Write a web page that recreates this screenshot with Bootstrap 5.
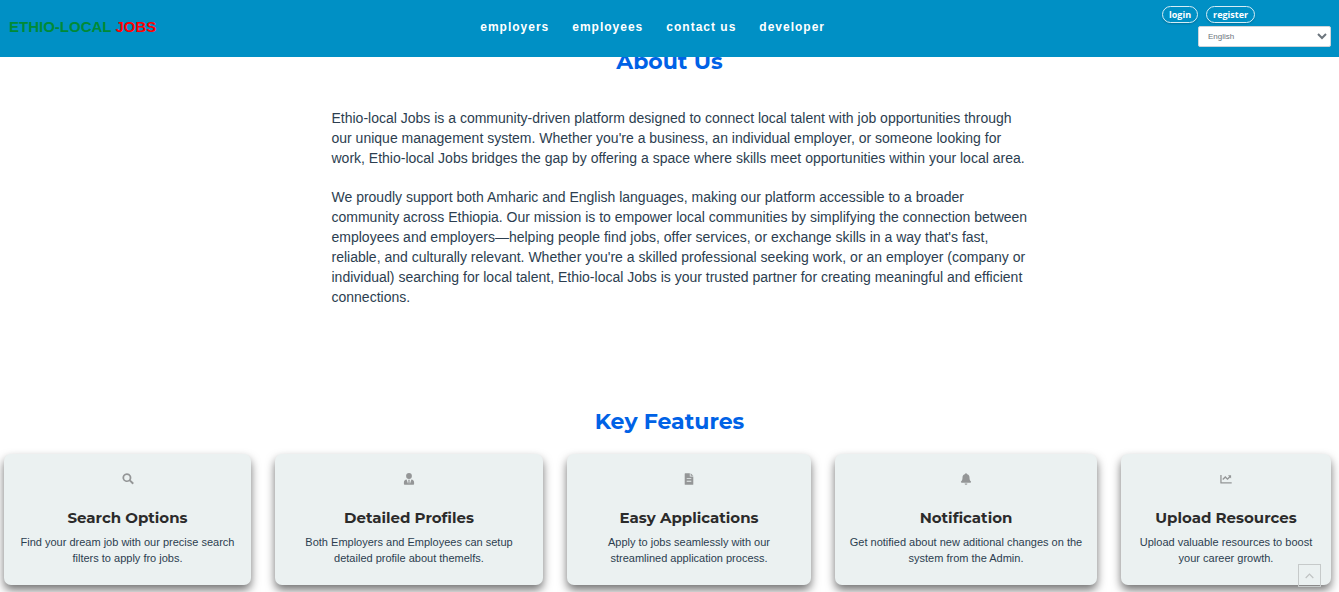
<!DOCTYPE html>
<html lang="en">
<head>
<meta charset="utf-8">
<meta name="viewport" content="width=device-width, initial-scale=1">
<title>Ethio-Local Jobs</title>
<link href="https://cdn.jsdelivr.net/npm/bootstrap@5.3.0/dist/css/bootstrap.min.css" rel="stylesheet">
<style>
  body { font-family: "Liberation Sans", Arial, sans-serif; color: #2c3e50; background: #fff; }
  .site-header { background: #0090c5; height: 57px; padding: 0 8px 0 9px; }
  .brand { font-size: 15px; line-height: 20px; font-weight: 700; color: #008a37; text-decoration: none; }
  .brand span { color: #f00; }
  .site-nav { gap: 23px; }
  .site-nav a { font-size: 12px; line-height: 20px; font-weight: 700; letter-spacing: 1px; color: #fff; text-decoration: none; }
  .account-area { width: 182px; gap: 3px; padding-top: 6px; }
  .auth-row { padding-left: 13px; }
  .pill-btn { font: 700 9px/13px "Open Sans", sans-serif; color: #fff; background: transparent; border: 1px solid #d5edf6; border-radius: 10px; padding: 1px 6px; height: 17px; box-shadow: 0 1px 2px rgba(0,0,0,.2); }
  .lang-select { width: 133px; height: 21px; font-size: 8px; color: #6c757d; background: #fff; border: 1px solid #ced4da; border-radius: 2px; padding: 0 5px; }
  .section-title { font-family: Montserrat, Inter, sans-serif; font-weight: 700; font-size: 22px; line-height: 28px; color: #0062e6; text-align: center; margin: 0; }
  .about { padding-top: 48px; }
  .about-text { max-width: 724px; margin: 32px auto 0; padding-left: 24px; font-size: 14px; line-height: 20px; }
  .about-text p { margin: 0 0 19px; }
  .features { padding-top: 82px; }
  .feature-grid { display: grid; grid-template-columns: 247fr 268fr 244fr 262fr 210fr; gap: 24px; padding: 18px 8px 7px 4px; }
  .feature { background: #ebf1f1; border-radius: 7px; padding: 17px 12px 19px; text-align: center; box-shadow: 0 5px 10px rgba(0,0,0,.55); }
  .feature svg { display: block; width: 12px; height: 16px; margin: 0 auto 22px; fill: #949697; }
  .feature h3 { font-family: Montserrat, Inter, sans-serif; font-weight: 700; font-size: 15px; line-height: 18px; color: #2b2b2b; margin: 0 0 7px; }
  .feature p { font-size: 11px; line-height: 16px; margin: 0; }
  .to-top { right: 18px; bottom: 5px; width: 23px; height: 23px; border: 1px solid #c6caca; background: transparent; padding: 0; }
</style>
</head>
<body>
<header class="site-header fixed-top d-flex justify-content-between">
  <div class="d-flex align-items-center pb-1"><a class="brand" href="#">ETHIO-LOCAL <span>JOBS</span></a></div>
  <nav class="site-nav d-flex align-items-center pb-1" aria-label="Main">
    <a href="#">employers</a><a href="#">employees</a><a href="#">contact us</a><a href="#">developer</a>
  </nav>
  <div class="account-area d-flex flex-column">
    <div class="auth-row d-flex gap-2"><button class="pill-btn" type="button">login</button><button class="pill-btn" type="button">register</button></div>
    <select class="lang-select align-self-end" aria-label="Language"><option>English</option><option>Amharic</option></select>
  </div>
</header>
<main>
  <section class="about">
    <h2 class="section-title">About Us</h2>
    <div class="about-text">
      <p>Ethio-local Jobs is a community-driven platform designed to connect local talent with job opportunities through our unique management system. Whether you're a business, an individual employer, or someone looking for work, Ethio-local Jobs bridges the gap by offering a space where skills meet opportunities within your local area.</p>
      <p>We proudly support both Amharic and English languages, making our platform accessible to a broader community across Ethiopia. Our mission is to empower local communities by simplifying the connection between employees and employers—helping people find jobs, offer services, or exchange skills in a way that's fast, reliable, and culturally relevant. Whether you're a skilled professional seeking work, or an employer (company or individual) searching for local talent, Ethio-local Jobs is your trusted partner for creating meaningful and efficient connections.</p>
    </div>
  </section>
  <section class="features">
    <h2 class="section-title">Key Features</h2>
    <div class="feature-grid">
      <article class="feature">
        <svg viewBox="0 0 12 16" aria-hidden="true"><path fill-rule="evenodd" d="M4.900 2.300a4.400 4.400 0 1 0 2.500 8l2.700 2.700q.5.4.9 0l.5-.5q.4-.5 0-.9L8.700 9a4.400 4.400 0 0 0-3.800-6.700zM4.900 4a2.700 2.700 0 1 1 0 5.400 2.700 2.700 0 0 1 0-5.400z"/></svg>
        <h3>Search Options</h3>
        <p>Find your dream job with our precise search filters to apply fro jobs.</p>
      </article>
      <article class="feature">
        <svg viewBox="0 0 12 16" aria-hidden="true"><circle cx="6" cy="5" r="2.900"/><path d="M3.600 8.600 5.100 13 5.500 10 5.100 8.700h1.800L6.500 10l.4 3 1.500-4.400c1.800.2 2.700 1.300 2.700 3v1.300q0 .8-.8.8H1.700q-.8 0-.8-.8v-1.300c0-1.700.9-2.800 2.700-3z"/></svg>
        <h3>Detailed Profiles</h3>
        <p>Both Employers and Employees can setup detailed profile about themelfs.</p>
      </article>
      <article class="feature">
        <svg viewBox="0 0 12 16" aria-hidden="true"><path fill-rule="evenodd" d="M2.300 2.200h4.500v3.300h3.500v7.700q0 .6-.6.6H2.300q-.6 0-.6-.6V2.800q0-.6.6-.6zM3.700 7.200v.9h4.600v-.9zm0 2.600v.9h4.600v-.9zM7.600 2.200l2.700 2.600H7.600z"/></svg>
        <h3>Easy Applications</h3>
        <p>Apply to jobs seamlessly with our streamlined application process.</p>
      </article>
      <article class="feature">
        <svg viewBox="0 0 12 16" aria-hidden="true"><path d="M6 2q.7 0 .7.9c1.900.4 2.800 1.700 2.800 3.600 0 2.100.5 3 1.300 3.800.6.700.2 1.500-.6 1.500H1.800c-.8 0-1.200-.8-.6-1.500.8-.8 1.300-1.700 1.300-3.800 0-1.900.9-3.200 2.800-3.600Q5.300 2 6 2zM4.600 12.400h2.800a1.400 1.400 0 0 1-2.800 0z"/></svg>
        <h3>Notification</h3>
        <p>Get notified about new aditional changes on the system from the Admin.</p>
      </article>
      <article class="feature">
        <svg viewBox="0 0 12 16" aria-hidden="true"><path d="M.3 4h1.300v7.200h10.100v1.300H.9q-.6 0-.6-.6zM8 4.300h3.100v3.100L10.100 6.500 7.500 9.100 5.300 6.900 3.200 9l-.9-.9 3-3 2.200 2.200 1.600-1.700z"/></svg>
        <h3>Upload Resources</h3>
        <p>Upload valuable resources to boost your career growth.</p>
      </article>
    </div>
  </section>
</main>
<button class="to-top position-fixed d-flex align-items-center justify-content-center" type="button" aria-label="Back to top">
  <svg width="9" height="6" viewBox="0 0 9 6" fill="none" stroke="#bfc3c3" stroke-width="1.200"><path d="M.7 5 4.500 1l3.800 4"/></svg>
</button>
<script src="https://cdn.jsdelivr.net/npm/bootstrap@5.3.0/dist/js/bootstrap.bundle.min.js"></script>
</body>
</html>
